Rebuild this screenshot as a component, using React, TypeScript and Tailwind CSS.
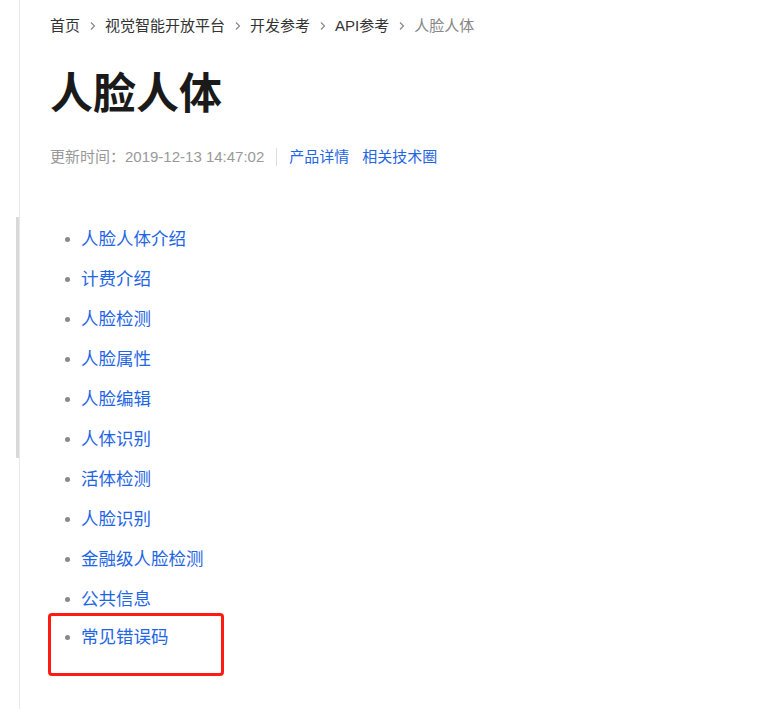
const crumbs = ["首页", "视觉智能开放平台", "开发参考", "API参考"];

const items = [
  "人脸人体介绍",
  "计费介绍",
  "人脸检测",
  "人脸属性",
  "人脸编辑",
  "人体识别",
  "活体检测",
  "人脸识别",
  "金融级人脸检测",
  "公共信息",
];

function Chevron() {
  return (
    <svg width="8" height="10" viewBox="0 0 8 10" className="mx-[8.5px]">
      <path d="M2 1.5 L5.5 5 L2 8.5" fill="none" stroke="#888" strokeWidth="1.2" />
    </svg>
  );
}

export default function App() {
  return (
    <div
      className="flex min-h-[709px] w-[765px] bg-white"
      style={{ fontFamily: '"Liberation Sans", "Noto Sans CJK SC", sans-serif' }}
    >
      {/* scroll rail */}
      <div className="flex w-[19px] shrink-0 justify-end pt-[217px]">
        <div className="h-[241px] w-[3px] bg-[#d9d9d9]" />
      </div>

      <div className="flex-1 border-l border-[#e8e8e8] pl-[30px] pt-[16px]">
        {/* breadcrumb */}
        <div className="flex h-[20px] items-center text-[15px] text-[#333]">
          {crumbs.map((c) => (
            <span key={c} className="flex items-center">
              {c}
              <Chevron />
            </span>
          ))}
          <span className="text-[#888]">人脸人体</span>
        </div>

        <h1 className="mt-[30px] text-[43px] font-bold leading-[56px] text-[#1a1a1a]">人脸人体</h1>

        <div className="mt-[25px] flex h-[20px] items-center text-[15px]">
          <span className="text-[#999]">更新时间：2019-12-13 14:47:02</span>
          <span className="mx-[12px] h-[18px] w-px bg-[#ddd]" />
          <a className="text-[#1f66e5]">产品详情</a>
          <a className="ml-[13px] text-[#1f66e5]">相关技术圈</a>
        </div>

        <ul className="mt-[52px] text-[17.5px]">
          {items.map((t) => (
            <li key={t} className="flex h-[40px] items-center">
              <span className="ml-[15px] mr-[11px] h-[5px] w-[5px] rounded-full bg-[#888]" />
              <span className="text-[#1f66e5]">{t}</span>
            </li>
          ))}
        </ul>

        {/* highlighted last item */}
        <div className="-ml-[2px] -mt-[6px] h-[63px] w-[176px] rounded-[4px] border-[3px] border-[#ff1a12] pt-[1px]">
          <div className="flex h-[40px] items-center">
            <span className="ml-[14px] mr-[11px] h-[5px] w-[5px] rounded-full bg-[#888]" />
            <span className="text-[17.5px] text-[#1f66e5]">常见错误码</span>
          </div>
        </div>
      </div>
    </div>
  );
}
